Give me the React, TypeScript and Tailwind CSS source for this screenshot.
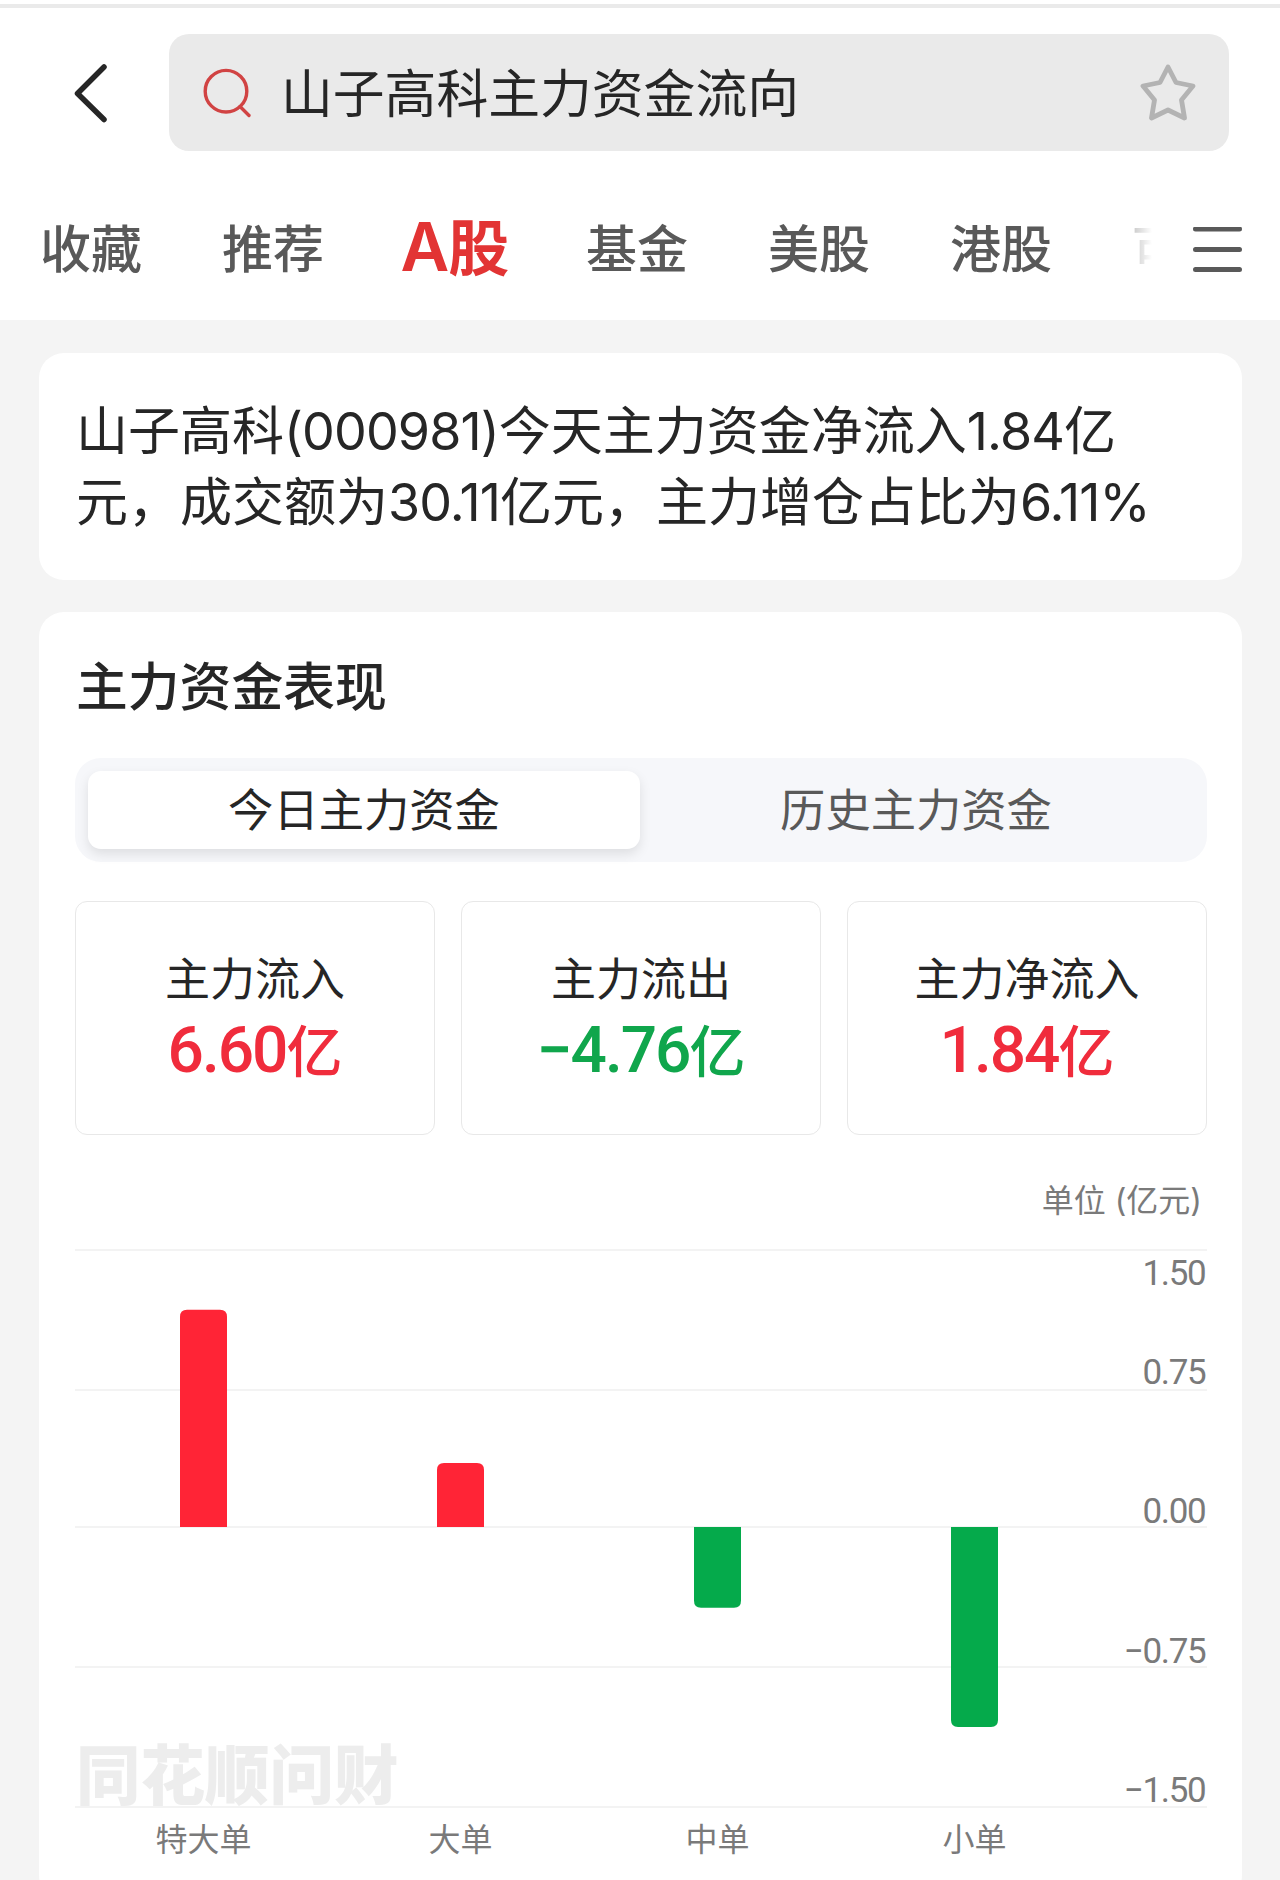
import React, { useState } from 'react'

const tabs = ['收藏', '推荐', 'A股', '基金', '美股', '港股']

const stats = [
  { label: '主力流入', value: '6.60', color: 'text-[#f02c3c]' },
  { label: '主力流出', value: '−4.76', color: 'text-[#10a64c]' },
  { label: '主力净流入', value: '1.84', color: 'text-[#f02c3c]' },
]

const bars = [
  { label: '特大单', value: 1.177 },
  { label: '大单', value: 0.347 },
  { label: '中单', value: -0.438 },
  { label: '小单', value: -1.084 },
]

// Grid rows, measured from the top of the chart
const ticks = [
  { text: '1.50', line: 1, base: 36 },
  { text: '0.75', line: 141, base: 135 },
  { text: '0.00', line: 278, base: 274 },
  { text: '−0.75', line: 418, base: 414 },
  { text: '−1.50', line: 558, base: 553 },
]

const ZERO = 278
const BAR_WIDTH = 47
const BAND = 257

function barPath(x: number, value: number) {
  const h = Math.abs(value) * 184.5
  const r = 7
  const d = value > 0 ? -1 : 1
  const end = ZERO + d * h
  return `M${x} ${ZERO}V${end - d * r}Q${x} ${end} ${x + r} ${end}H${x + BAR_WIDTH - r}Q${x + BAR_WIDTH} ${end} ${x + BAR_WIDTH} ${end - d * r}V${ZERO}Z`
}

function Num({ children }: { children: React.ReactNode }) {
  return <span className="tracking-[-0.9px]">{children}</span>
}

function Header() {
  return (
    <header className="h-[320px] bg-white pt-1">
      <div className="h-1 bg-[#eaeaea]" />
      <div className="mt-[26px] flex h-[117px] items-center">
        <button className="ml-[69px] w-[100px]">
          <svg width="42" height="64" viewBox="0 0 42 64" fill="none">
            <path d="M35 6L8.5 32.5L35 58.5" stroke="#262626" strokeWidth="5.5" strokeLinecap="round" strokeLinejoin="round" />
          </svg>
        </button>
        <div className="flex h-full w-[1060px] items-center rounded-[20px] bg-[#eaeaea] pl-[34px] pr-[32px]">
          <svg width="50" height="50" viewBox="0 0 50 50" fill="none" stroke="#d14343" strokeWidth="3.4" strokeLinecap="round">
            <circle cx="23" cy="23.2" r="20.8" />
            <path d="M37 38.5L46 47.5" />
          </svg>
          <span className="ml-[28px] pt-[2px] text-[51.8px] leading-[60px] text-[#262626]">山子高科主力资金流向</span>
          <svg className="ml-auto" width="58" height="58" viewBox="0 0 58 58" fill="none">
            <path
              d="M29 3L37 18.5L54 22L42.5 36L45.5 54L29 46L12.5 54L15.5 36L4 22L21 18.5Z"
              stroke="#b3b3b3"
              strokeWidth="4.8"
              strokeLinejoin="round"
            />
          </svg>
        </div>
      </div>
      <nav className="mt-[57px] flex h-[84px] items-center">
        <div className="relative flex h-full w-[1152px] items-center overflow-hidden">
          {tabs.map((tab) =>
            tab === 'A股' ? (
              <span key={tab} className="flex w-[182px] shrink-0 items-baseline justify-center pb-[5px] font-semibold leading-[79px] text-[#e23434]">
                <span className="text-[67px] tracking-[-1px]">A</span>
                <span className="text-[61px]">股</span>
              </span>
            ) : (
              <span key={tab} className="w-[182px] shrink-0 text-center text-[51px] font-medium leading-[84px] text-[#595959]">
                {tab}
              </span>
            )
          )}
          <span className="ml-[40px] shrink-0 text-[51px] font-medium leading-[84px] text-[#595959]">可转债</span>
          <div className="absolute right-0 top-0 h-full w-[36px] bg-gradient-to-r from-white/40 to-white" />
        </div>
        <svg className="ml-[38.5px]" width="54" height="46" viewBox="0 0 54 46" stroke="#595959" strokeWidth="5" strokeLinecap="round">
          <path d="M4.5 2H48.5M4.5 22.5H48.5M4.5 42.5H48.5" />
        </svg>
      </nav>
    </header>
  )
}

function FlowChart() {
  return (
    <svg width="1132" height="630" viewBox="0 0 1132 630" className="block">
      {ticks.map((tick) => (
        <g key={tick.text}>
          <rect x="0" y={tick.line - 1} width="1132" height="2" fill="#f3f3f3" />
          <text x="1130.5" y={tick.base} textAnchor="end" className="fill-[#7a7a7a] font-[Roboto,sans-serif] text-[35px] tracking-[-1.3px]">
            {tick.text}
          </text>
        </g>
      ))}
      <text x="1" y="550" className="fill-[#ededed] text-[64.5px] font-black">
        同花顺问财
      </text>
      {bars.map((bar, i) => (
        <g key={bar.label}>
          <path d={barPath(BAND * i + 105, bar.value)} fill={bar.value > 0 ? '#ff2436' : '#05aa4b'} />
          <text x={BAND * i + 128.5} y="602" textAnchor="middle" className="fill-[#7a7a7a] text-[32px]">
            {bar.label}
          </text>
        </g>
      ))}
    </svg>
  )
}

export default function App() {
  const [active, setActive] = useState(0)

  return (
    <div className="h-[1880px] w-[1280px] overflow-hidden bg-[#f4f4f4] font-[Inter,'Noto_Sans_CJK_SC',sans-serif]">
      <Header />

      <section className="ml-[39px] mt-[33px] h-[227px] w-[1203px] rounded-[25px] bg-white pl-[37px] pt-[43px] text-[52px] leading-[71px] text-[#262626]">
        <p className="whitespace-nowrap">
          山子高科<Num>(000981)</Num>今天主力资金净流入<Num>1.84</Num>亿
        </p>
        <p className="whitespace-nowrap">
          元，成交额为<Num>30.11</Num>亿元，主力增仓占比为<Num>6.11%</Num>
        </p>
      </section>

      <section className="ml-[39px] mt-8 h-[1288px] w-[1203px] rounded-[25px] bg-white pl-[36px] pt-[38px]">
        <h2 className="pl-px text-[51.8px] font-medium leading-[74px] text-[#262626]">主力资金表现</h2>

        <div className="mt-[34px] flex h-[104px] w-[1132px] items-center rounded-[26px] bg-[#f6f7fa] px-[13px] text-[45.3px] leading-[78px]">
          {['今日主力资金', '历史主力资金'].map((name, i) => (
            <button
              key={name}
              onClick={() => setActive(i)}
              className={
                active === i
                  ? 'h-[78px] w-[552px] rounded-[13px] bg-white pt-px text-[#262626] shadow-[0_5px_12px_rgba(0,0,0,0.1)]'
                  : 'h-[78px] w-[552px] pt-px text-[#595959]'
              }
            >
              {name}
            </button>
          ))}
        </div>

        <div className="mt-[39px] grid w-[1132px] grid-cols-3 gap-[26px]">
          {stats.map((stat) => (
            <div key={stat.label} className="h-[234px] rounded-xl border-[1.5px] border-[#e8e8e8] pt-[46px] text-center">
              <div className="text-[45px] leading-[64px] text-[#262626]">{stat.label}</div>
              <div className={`font-[Roboto,'Noto_Sans_CJK_SC',sans-serif] text-[64px] font-medium leading-[78px] ${stat.color}`}>
                <span className="tracking-[-2px]">{stat.value}</span>
                <span className="text-[56px]">亿</span>
              </div>
            </div>
          ))}
        </div>

        <div className="mt-[43px] flex h-[48px] w-[1131px] justify-end pr-[4px] text-[32px] leading-[46px] text-[#7a7a7a]">
          单位 (亿元)
        </div>
        <div className="mt-[23px]">
          <FlowChart />
        </div>
      </section>
    </div>
  )
}
